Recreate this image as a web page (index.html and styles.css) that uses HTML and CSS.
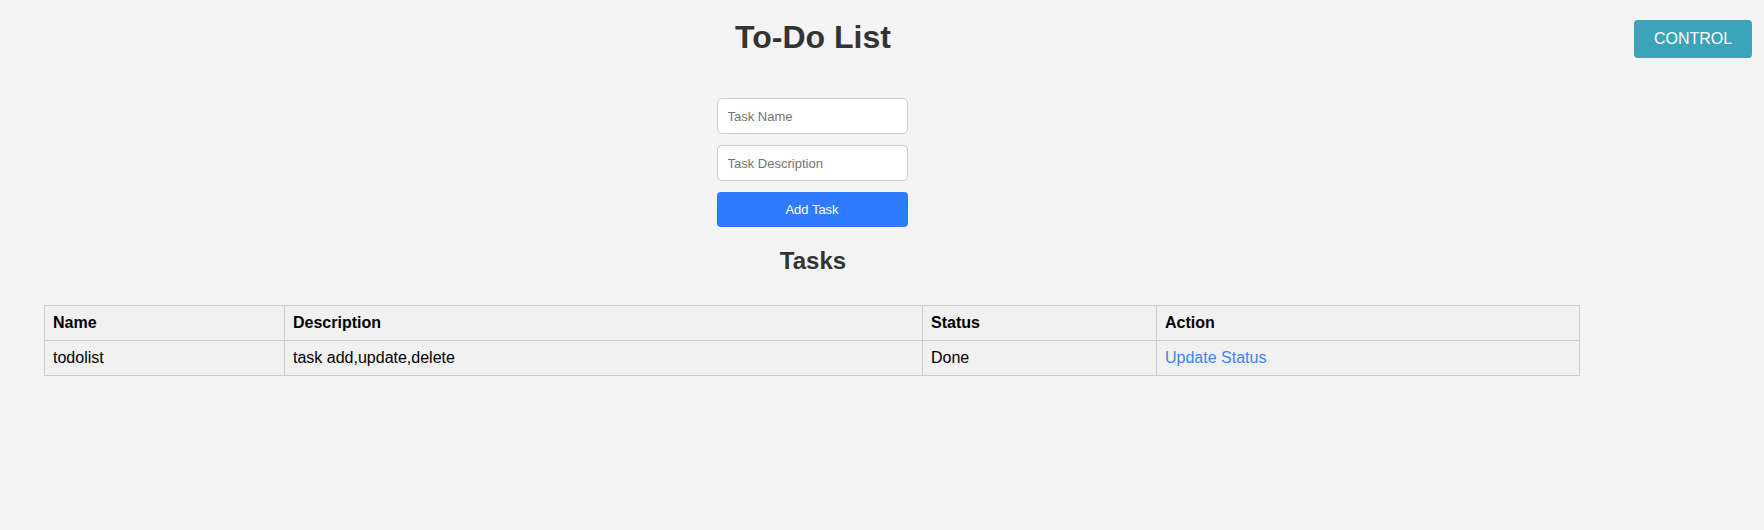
FILE: index.html
```html
<!DOCTYPE html>
<html lang="en">
<head>
<meta charset="utf-8">
<title>To-Do List</title>
<link rel="stylesheet" href="styles.css">
</head>
<body>
<div class="page">
  <main class="main">
    <h1 class="title">To-Do List</h1>
    <form class="task-form">
      <input class="field" type="text" placeholder="Task Name">
      <input class="field" type="text" placeholder="Task Description">
      <button class="add-btn" type="button">Add Task</button>
    </form>
    <h2 class="subtitle">Tasks</h2>
    <table class="tasks">
      <thead>
        <tr>
          <th class="col-name">Name</th>
          <th class="col-desc">Description</th>
          <th class="col-status">Status</th>
          <th class="col-action">Action</th>
        </tr>
      </thead>
      <tbody>
        <tr>
          <td>todolist</td>
          <td>task add,update,delete</td>
          <td>Done</td>
          <td><a class="link" href="#">Update Status</a></td>
        </tr>
      </tbody>
    </table>
  </main>
  <aside class="side">
    <button class="control-btn" type="button">CONTROL</button>
  </aside>
</div>
</body>
</html>
```

FILE: styles.css
```css
html, body {
  margin: 0;
  padding: 0;
  background: #f4f4f4;
  font-family: "Liberation Sans", Arial, sans-serif;
}

.page {
  display: flex;
  align-items: flex-start;
}

.main {
  width: 1624px;
  display: flex;
  flex-direction: column;
  align-items: center;
}

.title {
  margin: 19px 0 0;
  padding-left: 2px;
  font-size: 32px;
  font-weight: bold;
  color: #333;
  line-height: 37px;
}

.task-form {
  margin-top: 42px;
  display: flex;
  flex-direction: column;
  gap: 11px;
  width: 191px;
}

.field {
  box-sizing: border-box;
  height: 36px;
  width: 100%;
  padding: 0 10px;
  border: 1px solid #ccc;
  border-radius: 5px;
  background: #fff;
  font-family: "Liberation Sans", Arial, sans-serif;
  font-size: 13px;
  color: #333;
}

.field::placeholder {
  color: #757575;
}

.add-btn {
  box-sizing: border-box;
  height: 35px;
  width: 100%;
  border: none;
  border-radius: 4px;
  background: #2f7bff;
  color: #fff;
  font-family: "Liberation Sans", Arial, sans-serif;
  font-size: 13px;
}

.subtitle {
  margin: 20px 0 0;
  padding-left: 2px;
  font-size: 24px;
  line-height: 28px;
  font-weight: bold;
  color: #333;
}

.tasks {
  margin-top: 30px;
  width: 1536px;
  border-collapse: collapse;
  background: #f1f1f1;
  font-size: 16px;
  color: #000;
}

.tasks th,
.tasks td {
  border: 1px solid #ccc;
  padding: 8px;
  text-align: left;
  line-height: 18px;
}

.tasks th {
  font-weight: bold;
}

.col-name { width: 223px; }
.col-desc { width: 621px; }
.col-status { width: 217px; }

.link {
  color: #3a86ff;
  text-decoration: none;
}

.side {
  padding: 20px 0 0 10px;
}

.control-btn {
  box-sizing: border-box;
  width: 118px;
  height: 38px;
  border: none;
  border-radius: 4px;
  background: #3ca3bb;
  color: #fff;
  font-family: "Liberation Sans", Arial, sans-serif;
  font-size: 16px;
}
```
